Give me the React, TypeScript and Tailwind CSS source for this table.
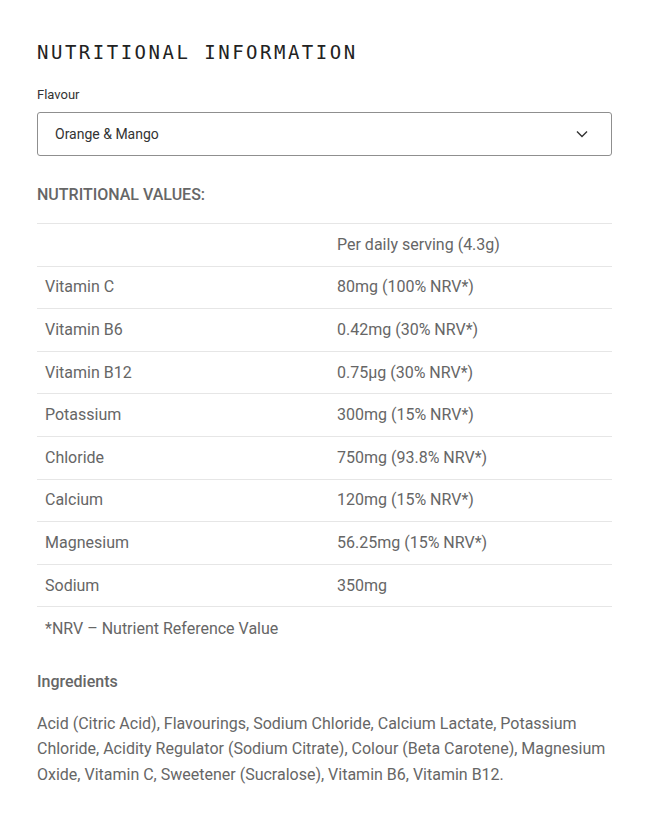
const rows: [string, string][] = [
  ["", "Per daily serving (4.3g)"],
  ["Vitamin C", "80mg (100% NRV*)"],
  ["Vitamin B6", "0.42mg (30% NRV*)"],
  ["Vitamin B12", "0.75µg (30% NRV*)"],
  ["Potassium", "300mg (15% NRV*)"],
  ["Chloride", "750mg (93.8% NRV*)"],
  ["Calcium", "120mg (15% NRV*)"],
  ["Magnesium", "56.25mg (15% NRV*)"],
  ["Sodium", "350mg"],
];

export default function App() {
  return (
    <div className="min-h-[828px] bg-white px-[37px] pt-[40px] font-['Roboto',sans-serif] text-[#666]">
      <h2 className="font-['DejaVu_Sans_Mono',monospace] text-[19px] leading-[24px] tracking-[2.5px] text-[#222]">
        NUTRITIONAL INFORMATION
      </h2>

      <label className="mt-[23px] block text-[13px] leading-[16px] text-[#333]">Flavour</label>
      <div className="mt-[9px] flex h-[44px] w-[575px] items-center justify-between rounded-[3px] border border-[#8f8f8f] pl-[17px] pr-[22px] text-[14px] text-[#333]">
        <span>Orange &amp; Mango</span>
        <svg width="14" height="14" viewBox="0 0 14 14" fill="none" stroke="#333" strokeWidth="1.4">
          <path d="M2 4.5l5 5 5-5" />
        </svg>
      </div>

      <h3 className="mt-[29px] text-[16px] font-medium leading-[20px] text-[#666]">NUTRITIONAL VALUES:</h3>

      <div className="mt-[18px] w-[575px] border-t border-[#e6e6e6]">
        {rows.map(([name, value], i) => (
          <div key={i} className="grid h-[42.6px] grid-cols-[292px_1fr] items-center border-b border-[#e6e6e6] text-[16px]">
            <span className="pl-[8px]">{name}</span>
            <span className="pl-[8px]">{value}</span>
          </div>
        ))}
        <div className="flex h-[42.6px] items-center pl-[8px] text-[16px]">*NRV – Nutrient Reference Value</div>
      </div>

      <h3 className="mt-[22px] text-[16px] font-medium leading-[20px]">Ingredients</h3>
      <p className="mt-[19px] w-[575px] text-[16px] leading-[25.5px]">
        Acid (Citric Acid), Flavourings, Sodium Chloride, Calcium Lactate, Potassium Chloride, Acidity Regulator (Sodium
        Citrate), Colour (Beta Carotene), Magnesium Oxide, Vitamin C, Sweetener (Sucralose), Vitamin B6, Vitamin B12.
      </p>
    </div>
  );
}
